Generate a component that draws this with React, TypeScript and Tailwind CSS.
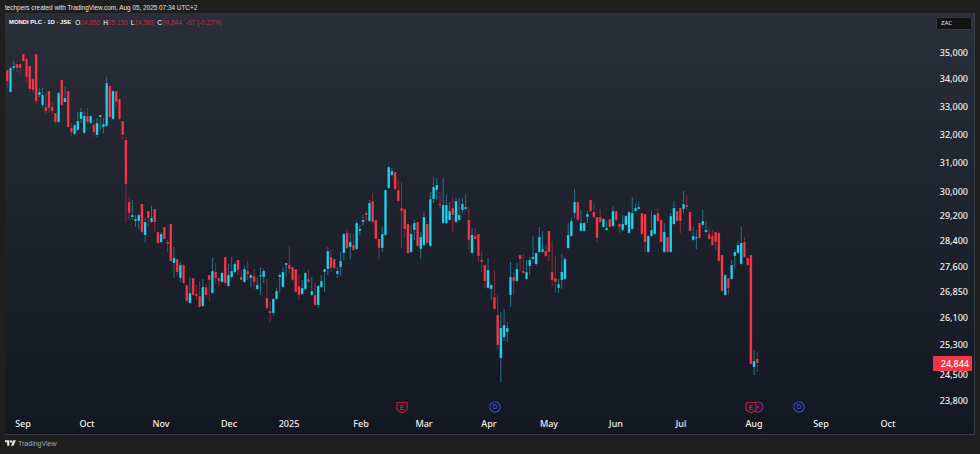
const R = 1;
const B = 0;

// bars in page pixels: body top, body bottom, wick top, wick bottom, colour
const bars: [number, number, number, number, number][] = [
  [70,81,70,88,R],[68,92,67,93,B],[66,68,61,70,B],[64,68,64,72,R],[64,68,64,73,R],[54,61,54,62,R],[59,77,58,82,R],[66,89,66,92,R],
  [79,90,78,93,R],[54,101,54,104,R],[92,95,88,97,B],[95,105,88,107,B],[107,111,93,114,R],[91,108,91,113,R],[107,111,102,114,R],[113,122,113,124,R],
  [93,122,92,123,B],[80,105,80,106,R],[98,102,87,103,B],[91,127,91,128,R],[128,132,123,136,R],[125,134,124,135,B],[121,130,112,131,B],[112,119,108,123,B],
  [116,133,111,134,B],[116,122,108,124,R],[116,123,115,124,B],[125,132,120,137,R],[123,135,118,137,B],[115,117,115,130,B],[124,127,118,133,B],[83,126,77,127,B],
  [86,117,85,118,R],[91,119,90,120,B],[91,102,91,107,R],[99,119,98,120,R],[121,135,121,140,R],[140,184,137,223,R],
  [202,213,197,220,R],[215,217,200,220,B],[219,221,215,227,B],[215,221,214,229,B],[204,232,204,233,R],[222,235,218,243,B],[211,218,211,227,R],[218,222,206,223,B],
  [209,222,209,232,R],[232,243,232,244,R],[234,242,232,244,B],[227,239,227,240,R],[242,244,240,252,R],[224,261,224,262,R],[258,263,247,278,B],[259,272,259,275,R],
  [265,278,262,282,B],[265,283,264,284,R],[285,301,285,302,R],[293,303,277,304,B],[278,295,278,296,R],[294,296,285,300,R],[296,307,281,308,R],[287,306,279,307,B],
  [287,295,284,297,R],[275,280,275,301,R],[271,293,258,294,B],[272,278,263,283,R],[278,281,278,287,R],[273,282,272,283,B],[257,283,257,286,R],[275,286,264,287,B],
  [271,277,257,278,B],[264,272,262,273,B],[260,270,260,275,R],[277,280,270,281,R],[269,282,266,283,B],[271,274,261,280,R],[275,278,274,287,B],[276,282,269,289,R],
  [285,289,277,290,B],[275,276,267,295,B],[271,277,268,283,B],[298,308,279,310,R],[311,313,302,322,R],[299,313,298,315,B],[291,299,288,300,B],[275,277,273,293,B],
  [272,287,267,288,B],[263,265,263,276,B],[265,269,246,273,R],[267,280,267,281,R],[269,292,269,293,R],[286,295,274,300,R],[288,294,280,295,B],[273,289,272,290,B],
  [279,282,269,283,R],[291,295,277,296,B],[295,305,283,306,R],[286,305,285,308,B],[281,287,275,288,B],[269,272,269,292,B],[251,269,247,275,B],
  [257,268,249,272,R],[259,268,259,269,R],[271,274,267,278,B],[261,267,252,276,B],[234,253,233,260,B],[233,248,229,249,R],[242,247,233,259,B],[245,250,234,251,R],
  [223,249,221,250,B],[229,231,225,235,B],[220,222,215,226,B],[213,215,211,221,R],[203,221,200,222,B],[201,222,193,223,R],[220,239,220,240,R],[239,248,239,259,R],
  [234,248,227,252,B],[190,235,190,236,B],[167,188,166,189,B],[171,175,168,176,B],[172,189,172,190,R],[190,201,180,202,R],[208,211,182,248,R],[209,229,209,238,R],
  [224,253,224,254,R],[234,252,225,253,B],[223,230,220,240,B],[222,246,222,247,R],[237,249,232,259,B],[217,245,212,246,B],[224,243,224,244,R],[199,246,192,247,B],
  [187,199,177,203,B],[185,190,178,200,B],[204,205,192,209,R],[205,223,178,224,B],[205,223,195,224,B],[211,220,202,221,B],[208,215,197,232,R],[201,222,198,223,B],
  [215,220,198,221,B],[204,210,198,213,B],[207,209,194,210,B],[220,240,207,250,R],[235,253,228,254,B],[236,239,228,240,R],[234,256,234,262,R],[260,262,252,272,R],
  [265,281,265,288,R],[270,288,258,289,B],[285,289,285,300,B],[297,309,270,310,R],[315,345,295,350,R],[328,358,312,382,B],[325,337,309,341,B],[328,332,322,342,B],
  [277,295,262,307,B],[277,281,272,295,R],[269,281,263,282,B],[255,259,255,272,R],[271,273,254,274,R],[272,279,260,280,B],[260,266,257,275,B],[257,259,236,260,B],
  [253,264,252,266,B],[237,252,227,253,B],[249,252,231,253,B],[251,256,245,257,R],[231,252,231,261,R],[272,280,241,286,R],[278,282,256,293,R],[284,288,279,293,B],
  [272,280,254,289,B],[259,279,257,280,B],[235,248,223,249,B],[221,236,218,237,B],[202,213,189,218,B],[202,220,202,221,R],[223,231,210,232,B],[223,231,222,232,B],
  [214,217,211,223,B],[200,211,200,212,R],[212,217,204,218,R],[217,238,217,242,R],[217,222,209,223,R],[219,227,218,228,B],[228,230,221,231,B],[219,227,219,228,R],
  [211,226,206,227,B],[211,220,211,221,R],[224,227,223,233,R],[224,230,215,231,B],[216,225,215,226,B],[212,233,211,234,B],[213,229,197,230,B],[208,211,203,212,B],
  [207,209,202,210,B],[213,234,213,235,R],[214,242,214,252,R],[236,252,235,253,B],[230,236,211,237,B],[215,234,214,235,B],[213,221,208,222,R],
  [220,242,220,243,R],[232,252,223,253,B],[237,252,237,253,R],[216,252,213,253,B],[208,224,201,225,B],[211,221,211,222,R],[208,221,208,233,R],[204,209,191,213,B],
  [205,207,195,210,R],[212,231,212,232,R],[236,240,227,241,B],[237,238,230,249,B],[223,238,223,239,R],[221,225,210,226,B],[230,232,222,233,B],[234,239,228,240,R],
  [236,245,230,246,R],[232,242,232,250,R],[233,261,233,262,R],[255,291,255,292,R],[275,295,274,296,B],[278,288,278,295,R],[265,279,260,280,B],[252,256,250,268,B],
  [245,253,241,254,B],[243,264,227,265,B],[242,257,237,258,R],[258,265,258,266,R],[255,364,255,365,R],[361,367,350,375,B],[359,363,352,372,R],
];

const prices = [
  ["35,000", 53], ["34,000", 79], ["33,000", 107], ["32,000", 135], ["31,000", 163], ["30,000", 192], ["29,200", 216],
  ["28,400", 241], ["27,600", 267], ["26,850", 292], ["26,100", 318], ["25,300", 345], ["24,500", 375], ["23,800", 401],
] as const;

const months = [
  ["Sep", 23], ["Oct", 87], ["Nov", 161], ["Dec", 229], ["2025", 289], ["Feb", 361], ["Mar", 424],
  ["Apr", 489], ["May", 549], ["Jun", 616], ["Jul", 681], ["Aug", 754], ["Sep", 821], ["Oct", 888],
] as const;

function Candles() {
  return (
    <svg className="absolute left-0 top-0" width="970" height="421" viewBox="5 13 970 421">
      {bars.map(([top, bottom, wickTop, wickBottom, color], i) => {
        const x = 7.3 + i * 3.205;
        const fill = color === R ? "#fb3446" : "#22d3ee";
        const wick = color === R ? "#8a2b3a" : "#1f7488";
        return (
          <g key={i}>
            <rect x={x - 0.5} y={wickTop} width="1" height={wickBottom - wickTop} fill={wick} />
            <rect x={x - 1.3} y={top} width="2.6" height={Math.max(bottom - top, 1.4)} fill={fill} stroke="#0c1a24" strokeOpacity="0.45" strokeWidth="0.5" />
          </g>
        );
      })}
    </svg>
  );
}

function EarningsMark({ x }: { x: number }) {
  return (
    <svg className="absolute" style={{ left: x - 5 - 6, top: 401 - 13 }} width="12" height="13" viewBox="0 0 12 13">
      <path d="M1 1.5h10v7.5l-5 3-5-3z" fill="#1a1c28" stroke="#b2202f" strokeWidth="1.2" strokeLinejoin="round" />
      <text x="6" y="8.5" textAnchor="middle" fontSize="6.5" fontFamily="Liberation Sans, sans-serif" fill="#e0404f">E</text>
    </svg>
  );
}

function DividendMark({ x }: { x: number }) {
  return (
    <svg className="absolute" style={{ left: x - 5 - 6, top: 401 - 13 }} width="12" height="12" viewBox="0 0 12 12">
      <circle cx="6" cy="6" r="5.2" fill="#141827" stroke="#2f54d8" strokeWidth="1.1" />
      <text x="6" y="8.3" textAnchor="middle" fontSize="6.5" fontFamily="Liberation Sans, sans-serif" fill="#4a6be8">D</text>
    </svg>
  );
}

function SplitMark({ x }: { x: number }) {
  return (
    <svg className="absolute" style={{ left: x - 5 - 6, top: 401 - 13 }} width="12" height="12" viewBox="0 0 12 12">
      <circle cx="6" cy="6" r="5" fill="none" stroke="#8a2fa8" strokeWidth="1.1" />
      <path d="M6.8 2.8 4.6 6.3h1.7L5.4 9.2l2.2-3.6H5.9z" fill="#a03cc0" />
    </svg>
  );
}

export default function App() {
  return (
    <div className="flex h-[454px] w-[980px] flex-col overflow-hidden bg-[#1f1f1f] font-['Noto_Sans',sans-serif] text-white">
      <div className="flex h-[13px] items-center pl-[5px] pt-[3px] font-['Liberation_Sans',sans-serif] text-[6.4px] leading-none text-[#e4e4e4]">
        techpers created with TradingView.com, Aug 05, 2025 07:34 UTC+2
      </div>

      <div className="relative ml-[5px] h-[422px] w-[970px] border-r border-b border-[#3b3d44] bg-gradient-to-b from-[#2a2e39] to-[#131722]">
        <div className="absolute left-[4px] top-[5px] flex items-center font-['Liberation_Sans',sans-serif] text-[6.5px] leading-[9px] text-[#b8303e]">
          <span className="mr-[4px] text-[5.9px] font-bold text-white">MONDI PLC · 1D · JSE</span>
          <span className="text-white">O</span><span className="mr-[3px]">24,950</span>
          <span className="text-white">H</span><span className="mr-[3px]">25,150</span>
          <span className="text-white">L</span><span className="mr-[3px]">24,589</span>
          <span className="text-white">C</span><span className="mr-[4px]">24,844</span>
          <span>-67 (-0.27%)</span>
        </div>

        <Candles />

        <div className="absolute left-[931px] top-[4px] flex h-[13px] w-[36px] items-center rounded-[2px] border border-[#363a45] bg-[#131313] pl-[4px] text-[6px] font-medium text-[#d8d8d8]">
          ZAC
        </div>

        {prices.map(([label, y]) => (
          <div key={label} className="absolute right-[6px] text-[9px] font-medium leading-[12px] text-[#f0f0f0]" style={{ top: y - 13 - 6 }}>
            {label}
          </div>
        ))}

        <div className="absolute left-[928px] top-[343px] flex h-[15px] w-[39px] items-center justify-end rounded-[1px] bg-[#f23645] pr-[3px] text-[9px] font-medium text-white">
          24,844
        </div>

        {months.map(([label, x]) => (
          <div key={label + x} className="absolute -translate-x-1/2 text-[9px] font-medium leading-[12px] text-[#f0f0f0]" style={{ left: x - 5, top: 405 }}>
            {label}
          </div>
        ))}

        <EarningsMark x={402} />
        <DividendMark x={495} />
        <SplitMark x={758} />
        <EarningsMark x={751} />
        <DividendMark x={799} />
      </div>

      <div className="flex flex-1 items-center gap-[2px] pl-[5px] pb-[3px] font-['Liberation_Sans',sans-serif] text-[7px] leading-none text-[#a8a8a8]">
        <svg width="11" height="8.5" viewBox="0 0 36 28" fill="#e8e8e8">
          <path d="M14 22H7V11H0V4h14v18zM28 22h-8l7.5-18h8L28 22z" />
          <circle cx="20" cy="8" r="4" />
        </svg>
        <span>TradingView</span>
      </div>
    </div>
  );
}
